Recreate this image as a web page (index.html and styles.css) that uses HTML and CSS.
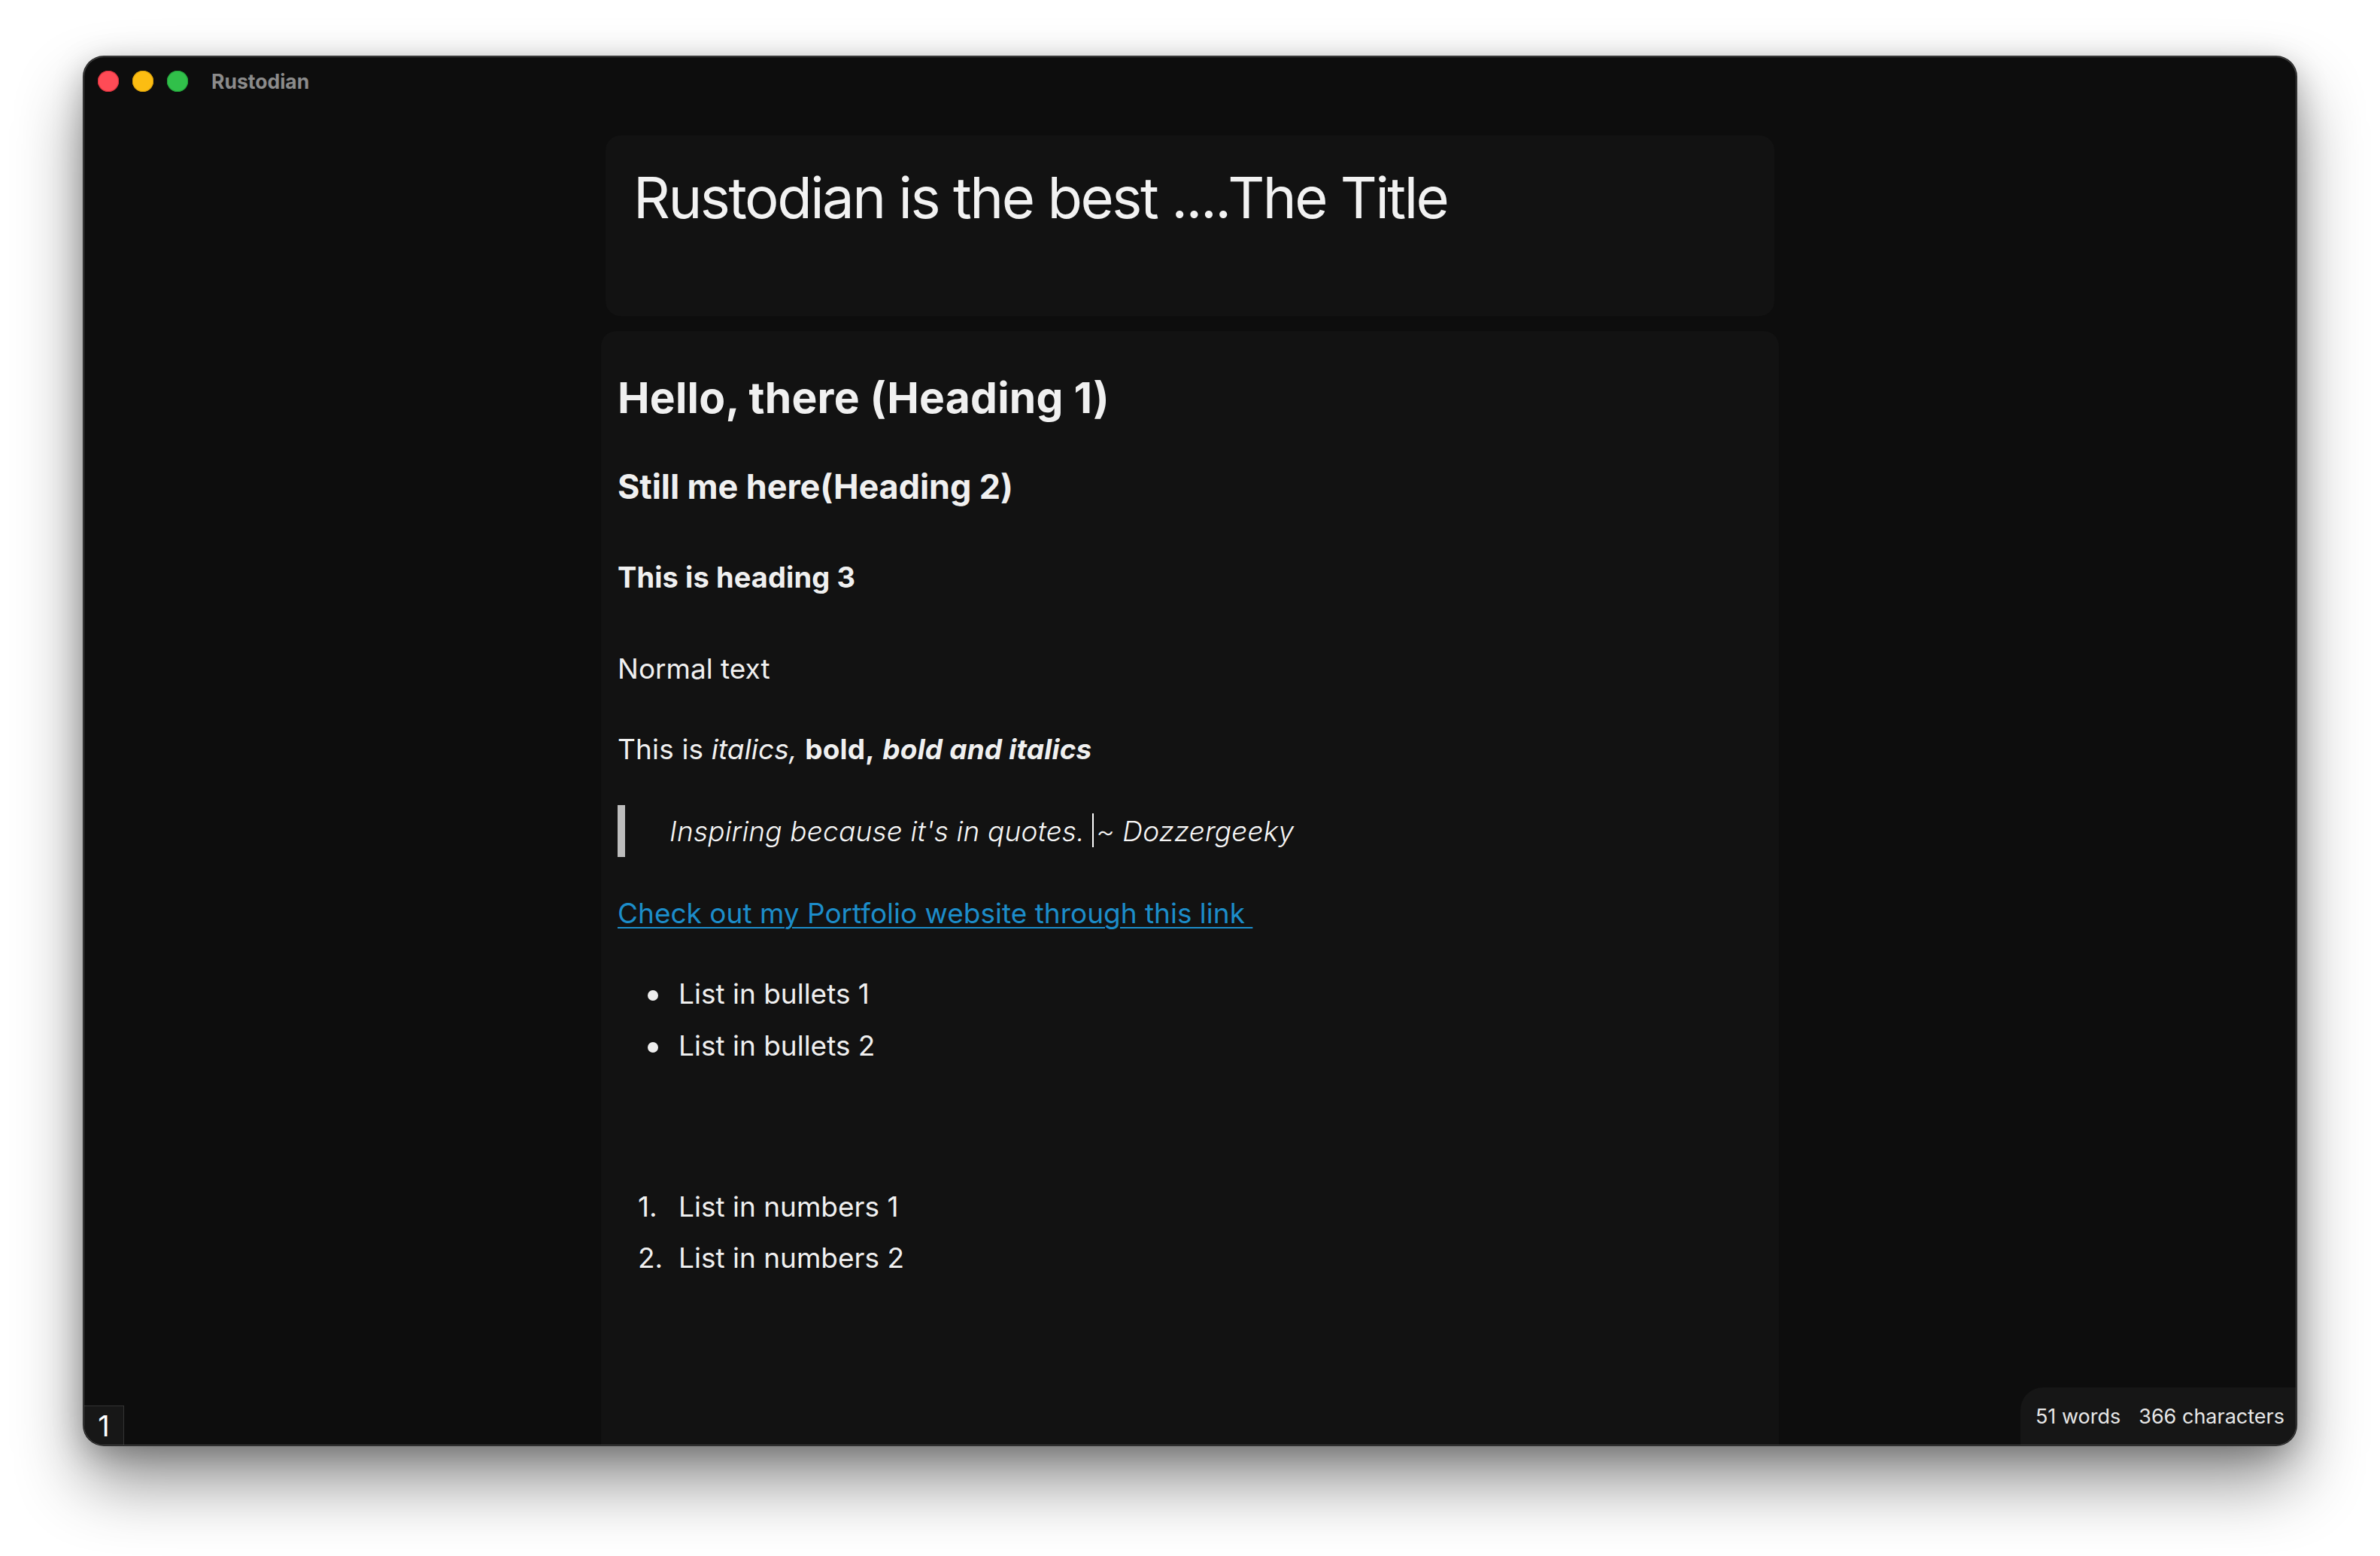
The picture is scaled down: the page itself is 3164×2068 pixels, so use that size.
FILE: index.html
```html
<!DOCTYPE html>
<html lang="en">
<head>
<meta charset="utf-8">
<title>Rustodian</title>
<link rel="stylesheet" href="styles.css">
</head>
<body>
<div class="window">
  <header class="titlebar">
    <div class="lights">
      <span class="light red"></span>
      <span class="light yellow"></span>
      <span class="light green"></span>
    </div>
    <span class="app-title">Rustodian</span>
  </header>
  <main class="main">
    <div class="column">
      <section class="title-card">
        <h1 class="doc-title">Rustodian is the best ....The Title</h1>
      </section>
      <article class="editor">
        <h1>Hello, there (Heading 1)</h1>
        <h2>Still me here(Heading 2)</h2>
        <h3>This is heading 3</h3>
        <p class="normal">Normal text</p>
        <p class="mixed">This is <em>italics,</em> <strong>bold,</strong> <strong><em>bold and italics</em></strong></p>
        <blockquote>Inspiring because it's in quotes. <span class="caret"></span>~ Dozzergeeky</blockquote>
        <p class="link-line"><a href="#">Check out my Portfolio website through this link&nbsp;</a></p>
        <ul class="bullets">
          <li>List in bullets 1</li>
          <li>List in bullets 2</li>
        </ul>
        <ol class="numbers">
          <li>List in numbers 1</li>
          <li>List in numbers 2</li>
        </ol>
      </article>
    </div>
  </main>
  <div class="page-num">1</div>
  <div class="stats"><span>51 words</span><span class="chars">366 characters</span></div>
</div>
</body>
</html>
```
FILE: styles.css
```css
*, *::before, *::after { box-sizing: border-box; }

html, body {
  margin: 0;
  padding: 0;
}

body {
  width: 3164px;
  height: 2068px;
  background: #ffffff;
  overflow: hidden;
  font-family: "Inter", "Noto Sans", sans-serif;
}

.window {
  position: relative;
  width: 2940px;
  height: 1844px;
  margin: 76px auto 0;
  background: #0d0d0d;
  border-radius: 26px;
  overflow: hidden;
  display: flex;
  flex-direction: column;
  box-shadow:
    0 0 0 1px #4a4a4a,
    0 0 0 2px #1a1a1a,
    0 48px 90px rgba(0, 0, 0, 0.45),
    0 10px 40px rgba(0, 0, 0, 0.25);
}

.titlebar {
  flex: 0 0 64px;
  display: flex;
  align-items: center;
  padding-left: 18px;
}

.lights {
  display: flex;
  gap: 18px;
}

.light {
  width: 28px;
  height: 28px;
  border-radius: 50%;
}

.red { background: #ff4b56; box-shadow: inset 0 0 0 1px #d9303b; }
.yellow { background: #fcbd12; box-shadow: inset 0 0 0 1px #dba00a; }
.green { background: #31c04a; box-shadow: inset 0 0 0 1px #22a23a; }

.app-title {
  margin-left: 31px;
  font-size: 26.5px;
  font-weight: 700;
  color: #8b8b8b;
}

.main {
  flex: 1;
  display: flex;
  justify-content: center;
  padding-top: 40px;
  min-height: 0;
}

.column {
  width: 1566px;
  display: flex;
  flex-direction: column;
  gap: 20px;
}

.title-card {
  flex: 0 0 240px;
  margin: 0 6px;
  background: #121212;
  border-radius: 20px;
  padding: 35px 41px 35px 37px;
}

.doc-title {
  margin: 0;
  font-size: 76px;
  line-height: 94px;
  font-weight: 400;
  letter-spacing: -2.5px;
  color: #f2f2f2;
}

.editor {
  flex: 1;
  background: #121212;
  border-radius: 20px 20px 0 0;
  padding: 55px 24px 0 22px;
  color: #f0f0f0;
  font-size: 37px;
  line-height: 46px;
}

.editor h1 {
  margin: 0;
  font-size: 57px;
  line-height: 68px;
  font-weight: 700;
  letter-spacing: 0.2px;
}

.editor h2 {
  margin: 57px 0 0;
  font-size: 45px;
  line-height: 54px;
  font-weight: 700;
  letter-spacing: -0.1px;
}

.editor h3 {
  margin: 70px 0 0;
  font-size: 38px;
  line-height: 46px;
  font-weight: 700;
  letter-spacing: 0.1px;
}

.editor p { margin: 0; }

.normal { margin-top: 76px !important; }
.mixed { margin-top: 61px !important; letter-spacing: 0.15px; }

.mixed strong { font-weight: 700; }

blockquote {
  margin: 51px 0 0;
  border-left: 10px solid #bdbdbd;
  padding: 11px 0 11px 59px;
  font-style: italic;
  font-weight: 300;
  color: #f6f6f6;
  letter-spacing: 0.2px;
}

.caret {
  display: inline-block;
  width: 2px;
  height: 45px;
  background: #ffffff;
  vertical-align: -8px;
  margin-right: 3px;
}

.link-line { margin-top: 52px !important; }

.link-line a {
  color: #1c8dca;
  text-decoration: underline;
  text-decoration-thickness: 2px;
  text-underline-offset: 5px;
}

.bullets, .numbers {
  list-style: none;
  margin: 0;
  padding: 0;
}

.bullets { margin-top: 49px; }
.numbers { margin-top: 146px; counter-reset: item; }

.bullets li, .numbers li {
  display: flex;
  align-items: center;
  line-height: 69px;
}

.numbers li { line-height: 68px; }

.bullets li::before {
  content: "";
  flex: 0 0 14px;
  height: 14px;
  border-radius: 50%;
  background: #eeeeee;
  margin: 4px 27px 0 40px;
}

.numbers li { counter-increment: item; }

.numbers li::before {
  content: counter(item) ".";
  flex: 0 0 81px;
  padding-left: 27px;
}

.page-num {
  position: absolute;
  left: 0;
  bottom: 0;
  width: 53px;
  height: 52px;
  background: #171717;
  border-top: 1px solid #343434;
  border-right: 1px solid #343434;
  color: #ffffff;
  font-size: 38px;
  line-height: 52px;
  text-align: center;
}

.stats {
  position: absolute;
  right: 0;
  bottom: 0;
  height: 76px;
  padding: 0 15px 0 20px;
  background: #161616;
  border-top-left-radius: 30px;
  display: flex;
  align-items: center;
  color: #e6e6e6;
  font-size: 27px;
}

.stats .chars { margin-left: 24px; }
```
